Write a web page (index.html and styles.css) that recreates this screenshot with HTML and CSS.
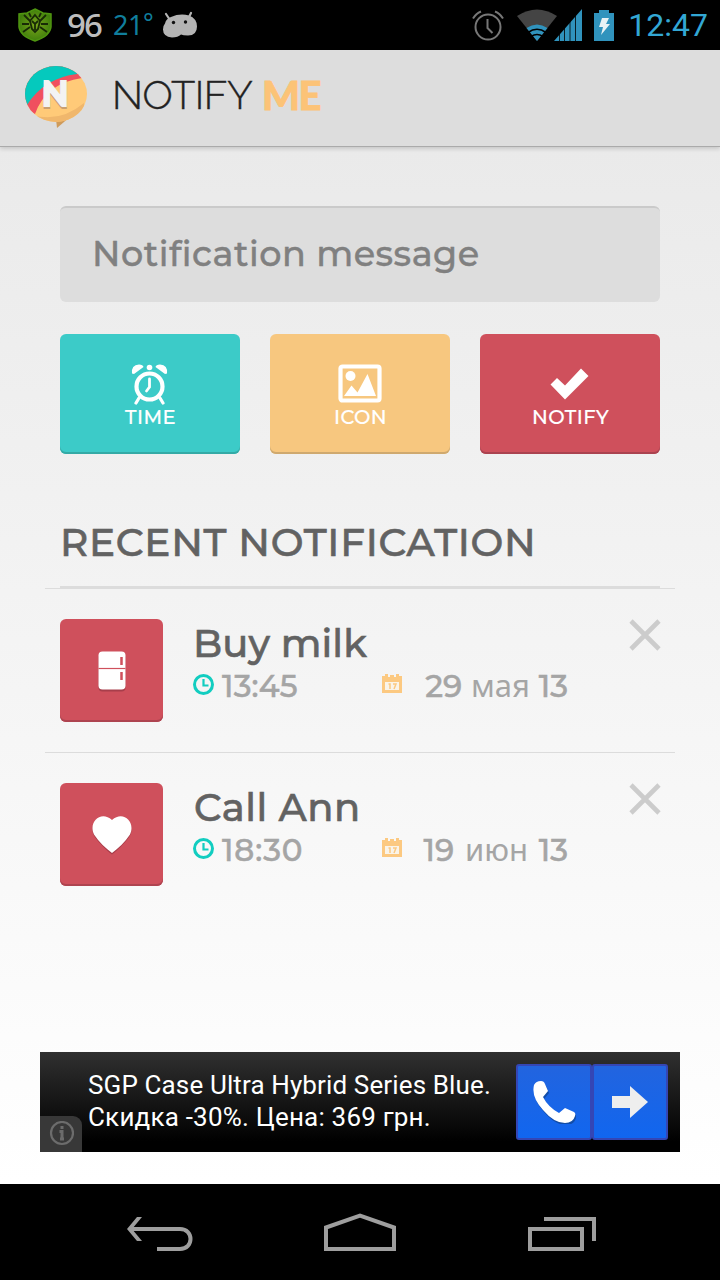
FILE: index.html
```html
<!DOCTYPE html>
<html lang="ru">
<head>
    <meta charset="UTF-8">
    <meta name="viewport" content="width=device-width, initial-scale=1.0">
    <title>Notify Me</title>
    <link rel="stylesheet" href="styles.css">
</head>
<body>
    <!-- Status bar -->
    <div class="statusbar">
        <svg class="shield" width="36" height="36" viewBox="0 0 36 36">
            <defs>
                <radialGradient id="green"><stop offset="0" stop-color="#79a51c"/><stop offset="1" stop-color="#417f0c"/></radialGradient>
            </defs>
            <path d="M18 2l8 4 8 1v13q-1 9-16 14Q3 29 2 20V7l8-1z" fill="url(#green)" stroke="#4f9510" stroke-width="1.5"/>
            <g stroke="#182b06" stroke-width="1.8" fill="none">
                <path d="M13 14L7 8M12 17H5M13 20l-7 5M23 14l6-6M24 17h7M23 20l7 5M14 10l-2-4M22 10l2-4"/>
                <path d="M18 8l5 6-2 8-3 3-3-3-2-8zM15 14l3 3 3-3M18 17v6"/>
            </g>
        </svg>
        <span class="battery-level">96</span>
        <span class="degrees">21<span class="degree-sign">°</span></span>
        <svg class="robot" width="36" height="28" viewBox="0 0 36 28">
            <path d="M4 3l4 6M29 2l-3 6" stroke="#b4b4b4" stroke-width="2.2" stroke-linecap="round"/>
            <path d="M9 6Q18 2 27 4.500q8 3 8 11 0 9-9 9-5 0-7-1-3 3-9 3-9-1-9-8 0-4 2-6 1-5 6-6.500z" fill="#b4b4b4"/>
            <circle cx="11.500" cy="11.500" r="1.700" fill="#111"/>
            <circle cx="23.500" cy="11" r="1.700" fill="#111"/>
        </svg>
        <div class="status-right">
            <svg class="alarm" width="34" height="32" viewBox="0 0 34 32" fill="none" stroke="#777" stroke-width="2">
                <circle cx="17" cy="18" r="12.500"/>
                <path d="M16.500 10v9l5 5M2 9.500Q5 4.500 10 2.500M32 9.500Q29 4.500 24 2.500"/>
            </svg>
            <svg class="wifi" width="40" height="32" viewBox="0 0 40 32">
                <path d="M0 7Q20-6 40 7L20 32z" fill="#444"/>
                <path d="M9.500 19Q20 12 30.500 19L20 32z" fill="#3093bd"/>
                <path d="M11 23.500Q20 17 29 23.500M14 27.500q6-4 12 0" fill="none" stroke="#000" stroke-width="1.600"/>
            </svg>
            <svg class="signal" width="28" height="32" viewBox="0 0 28 32">
                <path d="M0 32L28 0V32z" fill="#3093bd"/>
                <path d="M5.500 20v12M10.500 16v16M16 9v23M21.500 3v29" stroke="#000" stroke-width="0.800"/>
            </svg>
            <svg class="battery" width="20" height="31" viewBox="0 0 20 31">
                <path d="M5 0h10v3h5v28H0V3h5z" fill="#3093bd"/>
                <path d="M8 8h7l-3 6h4L7 25l2-8H5z" fill="#e8f2f5"/>
            </svg>
            <span class="clock">12:47</span>
        </div>
    </div>

    <!-- App header -->
    <div class="header">
        <svg class="logo" width="64" height="66" viewBox="0 0 64 66">
            <defs>
                <clipPath id="bubble"><ellipse cx="32" cy="29" rx="31" ry="28"/></clipPath>
            </defs>
            <path d="M32 54l1 9 14-12z" fill="#cf9b5b"/>
            <g clip-path="url(#bubble)">
                <path d="M0 0h64v60H0z" fill="#ffca78"/>
                <path d="M8 50Q36 58 60 38V64H8z" fill="#f0b76c"/>
                <path d="M0 0H58V13Q22 18 11 49L0 42z" fill="#f0505f"/>
                <path d="M0 0h56L53 9Q20 13 3 40L0 38z" fill="#05c9bd"/>
            </g>
            <text x="18" y="42.500" class="logo-letter-shadow">N</text>
            <text x="18" y="41" class="logo-letter">N</text>
        </svg>
        <div class="brand"><span class="brand-light">NOTIFY</span><span class="brand-bold">ME</span></div>
    </div>

    <div class="content">
        <div class="message">Notification message</div>

        <div class="buttons">
            <div class="button teal">
                <svg width="40" height="42" viewBox="0 0 40 42" fill="none" stroke="#fff">
                    <circle cx="19.500" cy="23.500" r="13" stroke-width="4.200"/>
                    <path d="M19.500 16v8l-3 4" stroke-width="2.800" stroke-linecap="round"/>
                    <path d="M9 35l-3 5M30 35l3 5" stroke-width="3.200" stroke-linecap="round"/>
                    <path d="M2 10.500Q1 2 9 1.500q4 0 4.500 2.500L4 11zM37 10.500Q38 2 30 1.500q-4 0-4.500 2.500L35 11z" fill="#fff" stroke="none"/>
                    <circle cx="19.500" cy="4.500" r="2.800" fill="#fff" stroke="none"/>
                </svg>
                <span>TIME</span>
            </div>
            <div class="button orange">
                <svg width="44" height="42" viewBox="0 0 44 42">
                    <rect x="2.500" y="3.500" width="39" height="34" rx="2" fill="none" stroke="#fff" stroke-width="4.200"/>
                    <circle cx="12.500" cy="13" r="5" fill="#fff"/>
                    <path d="M6 33l7.500-10.500 6 7 10-18.500L38 33z" fill="#fff"/>
                </svg>
                <span>ICON</span>
            </div>
            <div class="button red">
                <svg width="44" height="42" viewBox="0 0 44 42">
                    <path d="M2.500 21.500l6.500-6.500 8 7.500L33 5.500l7.500 7.500-23.500 23.500z" fill="#fff"/>
                </svg>
                <span>NOTIFY</span>
            </div>
        </div>

        <h2>RECENT NOTIFICATION</h2>

        <div class="list">
            <div class="item">
                <div class="thumb">
                    <svg width="42" height="42" viewBox="0 0 42 42">
                        <rect x="7.500" y="3.500" width="27" height="38" rx="4" fill="#a83e4b"/>
                        <rect x="7.500" y="1.500" width="27" height="38" rx="4" fill="#fff"/>
                        <path d="M7.500 18.500h27" stroke="#cf505c" stroke-width="1.200"/>
                        <path d="M30.500 7v8M30.500 22v8" stroke="#cf505c" stroke-width="2.500"/>
                    </svg>
                </div>
                <div class="details">
                    <div class="title">Buy milk</div>
                    <div class="meta">
                        <svg class="time-icon" width="22" height="22" viewBox="0 0 22 22" fill="none" stroke="#12cdc0" stroke-width="3">
                            <circle cx="10.500" cy="10.500" r="9"/>
                            <path d="M10.500 5v6.500h5" stroke-width="2.200"/>
                        </svg>
                        <span class="time">13:45</span>
                        <svg class="date-icon" width="20" height="20" viewBox="0 0 20 20">
                            <path d="M0 2h3V0h3v3h2V1h4v2h2V0h3v2h3v17H0z" fill="#fcc981"/>
                            <path d="M3 8h14v8H3z" fill="#faf4e9"/>
                            <path d="M6.500 10h1.500v5M11 10h3l-2 5" fill="none" stroke="#fcc981" stroke-width="1.500"/>
                        </svg>
                        <span class="date may">29 <span class="month">мая</span> 13</span>
                    </div>
                </div>
                <svg class="close" width="32" height="32" viewBox="0 0 32 32"><path d="M2 2l28 28M30 2L2 30" stroke="#ccc" stroke-width="4.600"/></svg>
            </div>
            <div class="item">
                <div class="thumb">
                    <svg width="42" height="42" viewBox="0 0 42 42">
                        <path d="M21 40.500C15 36 8 29 3.500 22.500-4 9 10-3 21 8 32-3 46 9 38.500 22.500 34 29 27 36 21 40.500z" fill="#a83e4b"/>
                        <path d="M21 39C15 34.500 8 28 3 20.500-3 8 10-4 21 6 32-4 45 8 39 20.500 34 28 27 34.500 21 39z" fill="#fff"/>
                    </svg>
                </div>
                <div class="details">
                    <div class="title call">Call Ann</div>
                    <div class="meta">
                        <svg class="time-icon" width="22" height="22" viewBox="0 0 22 22" fill="none" stroke="#12cdc0" stroke-width="3">
                            <circle cx="10.500" cy="10.500" r="9"/>
                            <path d="M10.500 5v6.500h5" stroke-width="2.200"/>
                        </svg>
                        <span class="time wide">18:30</span>
                        <svg class="date-icon" width="20" height="20" viewBox="0 0 20 20">
                            <path d="M0 2h3V0h3v3h2V1h4v2h2V0h3v2h3v17H0z" fill="#fcc981"/>
                            <path d="M3 8h14v8H3z" fill="#faf4e9"/>
                            <path d="M6.500 10h1.500v5M11 10h3l-2 5" fill="none" stroke="#fcc981" stroke-width="1.500"/>
                        </svg>
                        <span class="date june">19 <span class="month">июн</span> 13</span>
                    </div>
                </div>
                <svg class="close" width="32" height="32" viewBox="0 0 32 32"><path d="M2 2l28 28M30 2L2 30" stroke="#ccc" stroke-width="4.600"/></svg>
            </div>
        </div>

        <!-- Ad banner -->
        <div class="ad">
            <div class="ad-info">
                <svg width="26" height="26" viewBox="0 0 26 26" fill="none" stroke="#6c6c6c">
                    <circle cx="14" cy="12" r="11" stroke-width="2.200"/>
                    <path d="M14 5v3M11.500 10.500H14V18M12 18h4" stroke-width="3"/>
                </svg>
            </div>
            <div class="ad-text">
                <div>SGP Case Ultra Hybrid Series Blue.</div>
                <div class="second">Скидка -30%. Цена: 369 грн.</div>
            </div>
            <div class="ad-actions">
                <div class="ad-button">
                    <svg width="44" height="44" viewBox="0 0 44 44">
                        <path d="M2 5Q4 1 9 1q3 0 4 3l3 7-5 6q5 10 16 16l6-5 9 4q2 1 1 4-2 7-10 7Q22 43 11 30-1 17 2 5z" fill="#124da8" transform="translate(1 2)"/>
                        <path d="M2 5Q4 1 9 1q3 0 4 3l3 7-5 6q5 10 16 16l6-5 9 4q2 1 1 4-2 7-10 7Q22 43 11 30-1 17 2 5z" fill="#fff"/>
                    </svg>
                </div>
                <div class="ad-button">
                    <svg width="36" height="32" viewBox="0 0 36 32"><path d="M0 10h18V0l18 16-18 16V22H0z" fill="#eee"/></svg>
                </div>
            </div>
        </div>
    </div>

    <!-- Navigation bar -->
    <div class="navbar">
        <svg width="68" height="36" viewBox="0 0 68 36" fill="none" stroke="#9e9e9e" stroke-width="4">
            <path d="M5 16h49c14 0 14 20 0 20H31" transform="translate(0 -2)"/>
            <path d="M11 2h5L6 14l10 12h-5L1 14z" fill="#9e9e9e" stroke="none"/>
        </svg>
        <svg class="home" width="72" height="40" viewBox="0 0 72 40" fill="none" stroke="#9e9e9e" stroke-width="4">
            <path d="M2 38V16.500L36 4.500l34 12V38z"/>
        </svg>
        <svg width="68" height="36" viewBox="0 0 68 36" fill="none" stroke="#9e9e9e" stroke-width="4">
            <path d="M2 14h52v20H2zM16 4h50v22"/>
        </svg>
    </div>
</body>
</html>
```

FILE: styles.css
```css
body {
    margin: 0;
    width: 720px;
    height: 1280px;
    display: flex;
    flex-direction: column;
    overflow: hidden;
    font-family: Montserrat, Inter, "Noto Sans", sans-serif;
    font-weight: 500;
    background: #000;
}
svg {
    display: block;
    flex: none;
}
.statusbar {
    height: 50px;
    flex: none;
    display: flex;
    align-items: center;
    background: #000;
    white-space: nowrap;
}
.shield {
    margin-left: 17px;
}
.battery-level {
    margin-left: 14px;
    width: 46px;
    font: 500 33px/46px "Noto Sans", sans-serif;
    letter-spacing: -2px;
    color: #bdbdbd;
}
.degrees {
    width: 38px;
    font: 400 27px/46px "Noto Sans", sans-serif;
    letter-spacing: -0.5px;
    color: #107e9c;
}
.degree-sign {
    font-size: 25px;
    line-height: 1;
    vertical-align: 3px;
}
.robot {
    margin-left: 11px;
}
.status-right {
    margin-left: auto;
    display: flex;
    align-items: center;
    padding-right: 12px;
}
.alarm {
    margin-right: 1px;
}
.wifi {
    margin-left: 11px;
}
.signal {
    margin-left: -3px;
}
.battery {
    margin-left: 12px;
}
.clock {
    margin-left: 14px;
    font: 400 32px/52px Roboto, sans-serif;
    color: #33a7d4;
}
.header {
    height: 96px;
    flex: none;
    display: flex;
    align-items: center;
    background: #ddd;
    border-bottom: 1px solid #aaa;
    position: relative;
    box-shadow: 0 2px 4px rgba(0,0,0,0.15);
}
.logo {
    margin-left: 24px;
}
.logo-letter, .logo-letter-shadow {
    font: 900 34px Lato, sans-serif;
    fill: #f3f3f3;
    stroke: #f3f3f3;
    stroke-width: 2px;
}
.logo-letter-shadow {
    fill: #c9a071;
    stroke: #c9a071;
}
.brand {
    margin: -6px 0 0 24px;
    display: flex;
    font-size: 40px;
    line-height: 48px;
}
.brand-light {
    width: 150px;
    font-family: Raleway, Lato, sans-serif;
    font-weight: 300;
    letter-spacing: -0.5px;
    color: #222;
    -webkit-text-stroke: 0.4px #222;
}
.brand-bold {
    font-family: Lato, sans-serif;
    font-weight: 900;
    letter-spacing: -1.5px;
    color: #fcc377;
    -webkit-text-stroke: 0.8px #fcc377;
}
.content {
    height: 1037px;
    flex: none;
    display: flex;
    flex-direction: column;
    background: linear-gradient(#eaeaea, #fff);
}
.message {
    box-sizing: border-box;
    height: 96px;
    margin: 59px 60px 0;
    padding-left: 32px;
    line-height: 91px;
    font-size: 35px;
    letter-spacing: 0.5px;
    color: #808080;
    -webkit-text-stroke: 0.4px #808080;
    background: #ddd;
    border-top: 2px solid #cacaca;
    border-radius: 6px;
}
.buttons {
    display: flex;
    gap: 30px;
    margin: 32px 60px 0;
}
.button {
    box-sizing: border-box;
    width: 180px;
    height: 120px;
    padding-top: 29px;
    display: flex;
    flex-direction: column;
    align-items: center;
    font-size: 19.5px;
    line-height: 24px;
    letter-spacing: 0.4px;
    color: #fff;
    -webkit-text-stroke: 0.2px #fff;
    border-radius: 6px;
}
.button span {
    padding-left: 1px;
}
.teal {
    background: #3ccbc8;
    box-shadow: inset 0 -2px #34aaa6;
}
.orange {
    background: #f7c77f;
    box-shadow: inset 0 -2px #cfa96f;
}
.red {
    background: #cf505c;
    box-shadow: inset 0 -2px #aa4350;
}
h2 {
    margin: 62px 60px 0;
    height: 70px;
    line-height: 52px;
    font-size: 39px;
    font-weight: 500;
    letter-spacing: 0.7px;
    color: #626262;
    -webkit-text-stroke: 0.6px #626262;
    border-bottom: 2px solid #dcdcdc;
    white-space: nowrap;
}
.list {
    margin: 0 45px;
}
.item {
    box-sizing: border-box;
    height: 164px;
    padding: 30px 15px;
    display: flex;
    border-top: 1px solid #dcdcdc;
}
.thumb {
    width: 103px;
    height: 103px;
    flex: none;
    display: flex;
    align-items: center;
    justify-content: center;
    background: #cf505c;
    border-radius: 6px;
    box-shadow: inset 0 -2px #ae4450;
}
.details {
    width: 375px;
    flex: none;
    margin-left: 30px;
    white-space: nowrap;
}
.title {
    height: 50px;
    line-height: 49px;
    font-size: 38.5px;
    letter-spacing: 0.15px;
    color: #626262;
    -webkit-text-stroke: 0.6px #626262;
}
.title.call {
    padding-left: 1px;
    letter-spacing: 0.5px;
}
.meta {
    height: 34px;
    display: flex;
    line-height: 34px;
    font-size: 31px;
    color: #a5a5a5;
    -webkit-text-stroke: 0.5px #a5a5a5;
}
.time-icon {
    margin-top: 5px;
}
.time {
    width: 160px;
    margin-left: 7px;
    line-height: 35px;
    letter-spacing: 0.2px;
}
.time.wide {
    letter-spacing: 0.9px;
}
.date-icon {
    margin-top: 5px;
}
.date {
    margin-left: auto;
    height: 34px;
    line-height: 33px;
}
.may {
    word-spacing: 0.5px;
}
.june {
    word-spacing: 2.5px;
}
.month {
    font-family: "Noto Sans", sans-serif;
    font-weight: 400;
    -webkit-text-stroke: 0;
}
.close {
    margin-left: 61px;
}
.ad {
    height: 100px;
    margin: auto 40px 32px;
    display: flex;
    color: #fff;
    background: linear-gradient(#303030, #000 90%);
}
.ad-info {
    width: 42px;
    height: 36px;
    align-self: flex-end;
    display: flex;
    align-items: center;
    justify-content: center;
    background: #383838;
    border-top-right-radius: 9px;
}
.ad-text {
    width: 428px;
    padding: 17px 0 0 6px;
    font: 400 26px/32px Roboto, sans-serif;
    letter-spacing: 0.13px;
    white-space: nowrap;
}
.second {
    letter-spacing: 0.2px;
}
.ad-actions {
    height: 76px;
    margin-top: 12px;
    display: flex;
}
.ad-button {
    box-sizing: border-box;
    width: 76px;
    height: 76px;
    display: flex;
    align-items: center;
    justify-content: center;
    background: linear-gradient(#2264df, #1166ef);
    border: 2px solid #3446b5;
    border-radius: 3px;
}
.navbar {
    height: 96px;
    flex: none;
    display: flex;
    align-items: center;
    justify-content: space-between;
    padding: 2px 124px 0 126px;
    box-sizing: border-box;
    background: #000;
}
.home {
    margin: -4px 2px 0 0;
}
```
